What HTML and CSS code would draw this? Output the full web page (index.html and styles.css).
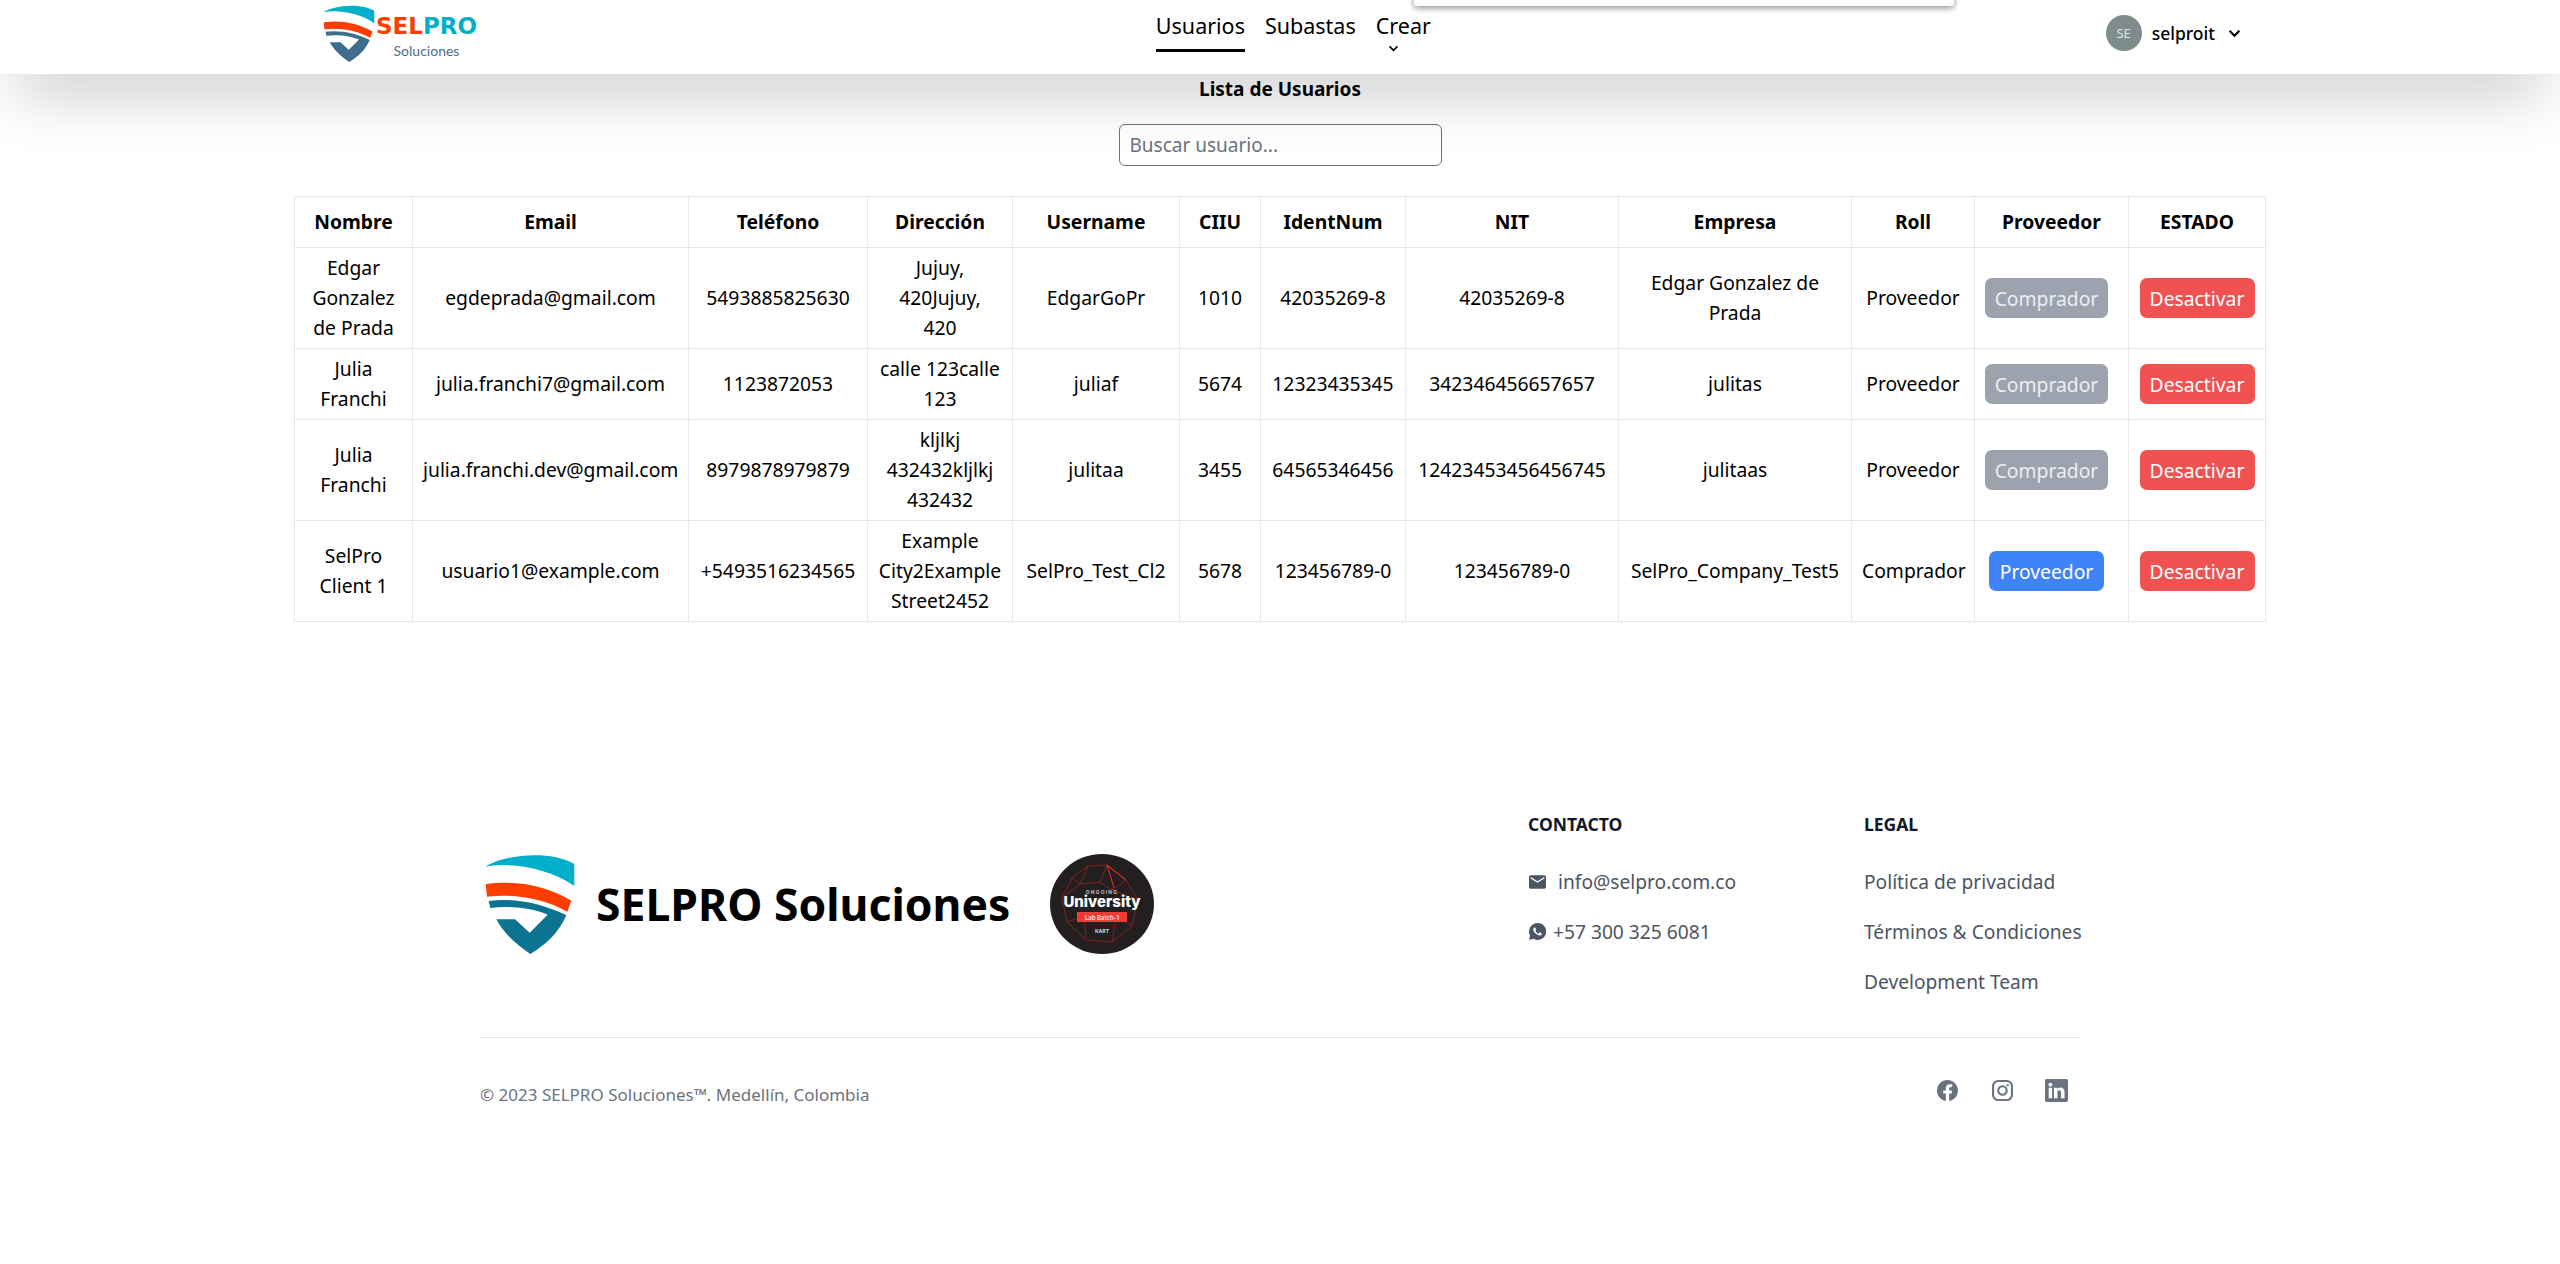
FILE: index.html
```html
<!DOCTYPE html>
<html lang="es">
<head>
    <meta charset="UTF-8">
    <meta name="viewport" content="width=device-width, initial-scale=1.0">
    <title>SELPRO Soluciones - Usuarios</title>
    <link rel="stylesheet" href="styles.css">
</head>
<body>
    <svg class="sprite" aria-hidden="true">
        <symbol id="shield" viewBox="45 42 268 300">
            <path class="shield-top" d="M45 80C85 50 230 25 312 72L312 138C240 85 120 65 45 80Z"/>
            <path class="shield-mid" d="M46 133C130 120 225 135 303 182L291 215C220 175 130 160 50 170Z"/>
            <path class="shield-low" d="M55 183C130 172 215 190 288 226C265 280 225 315 180 342C135 310 100 280 78 238L134 238L178 278L232 224C180 203 120 197 60 204Z"/>
        </symbol>
    </svg>

    <header class="topbar">
        <div class="popup"></div>
        <a class="brand" href="#">
            <svg class="brand-shield"><use href="#shield"/></svg>
            <span class="brand-text">
                <span class="brand-name"><span class="sel">SEL</span><span class="pro">PRO</span></span>
                <span class="brand-sub">Soluciones</span>
            </span>
        </a>
        <nav class="nav">
            <a class="nav-link active" href="#">Usuarios</a>
            <a class="nav-link" href="#">Subastas</a>
            <a class="nav-link nav-drop" href="#">Crear
                <svg class="chevron" viewBox="0 0 12 8"><path d="M1.5 1.5L6 6l4.500-4.500"/></svg>
            </a>
        </nav>
        <div class="user">
            <span class="avatar">SE</span>
            <span class="user-name">selproit</span>
            <svg class="chevron" viewBox="0 0 12 8"><path d="M1.500 1.500L6 6l4.500-4.500"/></svg>
        </div>
    </header>

    <main class="content">
        <h1 class="title">Lista de Usuarios</h1>
        <input class="search" type="text" placeholder="Buscar usuario...">
        <table class="users">
            <colgroup>
                <col class="c-nombre"><col class="c-email"><col class="c-tel"><col class="c-dir">
                <col class="c-user"><col class="c-ciiu"><col class="c-ident"><col class="c-nit">
                <col class="c-empresa"><col class="c-roll"><col class="c-prov"><col class="c-estado">
            </colgroup>
            <thead>
                <tr>
                    <th>Nombre</th><th>Email</th><th>Teléfono</th><th>Dirección</th>
                    <th>Username</th><th>CIIU</th><th>IdentNum</th><th>NIT</th>
                    <th>Empresa</th><th>Roll</th><th>Proveedor</th><th>ESTADO</th>
                </tr>
            </thead>
            <tbody>
                <tr>
                    <td>Edgar Gonzalez de Prada</td>
                    <td>egdeprada@gmail.com</td>
                    <td>5493885825630</td>
                    <td>Jujuy,<br>420Jujuy,<br>420</td>
                    <td>EdgarGoPr</td>
                    <td>1010</td>
                    <td>42035269-8</td>
                    <td>42035269-8</td>
                    <td>Edgar Gonzalez de Prada</td>
                    <td>Proveedor</td>
                    <td><button class="btn btn-gray">Comprador</button></td>
                    <td><button class="btn btn-red">Desactivar</button></td>
                </tr>
                <tr>
                    <td>Julia Franchi</td>
                    <td>julia.franchi7@gmail.com</td>
                    <td>1123872053</td>
                    <td>calle 123calle<br>123</td>
                    <td>juliaf</td>
                    <td>5674</td>
                    <td>12323435345</td>
                    <td>342346456657657</td>
                    <td>julitas</td>
                    <td>Proveedor</td>
                    <td><button class="btn btn-gray">Comprador</button></td>
                    <td><button class="btn btn-red">Desactivar</button></td>
                </tr>
                <tr>
                    <td>Julia Franchi</td>
                    <td>julia.franchi.dev@gmail.com</td>
                    <td>8979878979879</td>
                    <td>kljlkj<br>432432kljlkj<br>432432</td>
                    <td>julitaa</td>
                    <td>3455</td>
                    <td>64565346456</td>
                    <td>12423453456456745</td>
                    <td>julitaas</td>
                    <td>Proveedor</td>
                    <td><button class="btn btn-gray">Comprador</button></td>
                    <td><button class="btn btn-red">Desactivar</button></td>
                </tr>
                <tr>
                    <td>SelPro Client 1</td>
                    <td>usuario1@example.com</td>
                    <td>+5493516234565</td>
                    <td>Example<br>City2Example<br>Street2452</td>
                    <td>SelPro_Test_Cl2</td>
                    <td>5678</td>
                    <td>123456789-0</td>
                    <td>123456789-0</td>
                    <td>SelPro_Company_Test5</td>
                    <td>Comprador</td>
                    <td><button class="btn btn-blue">Proveedor</button></td>
                    <td><button class="btn btn-red">Desactivar</button></td>
                </tr>
            </tbody>
        </table>
    </main>

    <footer class="footer">
        <div class="footer-top">
            <div class="footer-brand">
                <svg class="footer-shield"><use href="#shield"/></svg>
                <span class="footer-name">SELPRO Soluciones</span>
                <svg class="badge" viewBox="0 0 104 100">
                    <ellipse cx="52" cy="50" rx="52" ry="50" fill="#231f20"/>
                    <g class="badge-net">
                        <path d="M38 12L57 11L76 26L88 46L82 72L62 88L36 86L17 68L12 44L22 24Z"/>
                        <path d="M38 12L30 30L12 44M57 11L50 28L30 30L22 24M57 11L76 26L62 36L50 28M88 46L62 36M17 68L34 62L36 86M82 72L66 62L62 88M34 62L66 62"/>
                    </g>
                    <path class="badge-hot" d="M57 11L64 34M57 11L76 26"/>
                    <text class="badge-small" x="52" y="40">ONGOING</text>
                    <text class="badge-title" x="52" y="53">University</text>
                    <rect x="27" y="58" width="50" height="10" fill="#ef3b36"/>
                    <text class="badge-lab" x="52" y="65.500">Lab Batch-1</text>
                    <text class="badge-small badge-foot" x="52" y="79">KART</text>
                </svg>
            </div>
            <div class="footer-col">
                <h2 class="footer-head">CONTACTO</h2>
                <a class="footer-link contact-mail" href="#">
                    <svg class="ico-mail" viewBox="2 4 20 16"><path d="M20 4H4c-1.100 0-2 .9-2 2v12c0 1.100.9 2 2 2h16c1.100 0 2-.9 2-2V6c0-1.100-.9-2-2-2zm0 4l-8 5-8-5V6l8 5 8-5v2z"/></svg>
                    info@selpro.com.co
                </a>
                <a class="footer-link contact-phone" href="#">
                    <svg class="ico-wa" viewBox="0 0 16 16">
                        <path d="M8 0a8 8 0 0 0-6.900 12L0 16l4.200-1.100A8 8 0 1 0 8 0z"/>
                        <path class="ico-wa-phone" d="M11.615 9.550c-.2-.1-1.170-.578-1.353-.646-.182-.065-.315-.1-.445.099-.133.197-.513.646-.627.775-.114.133-.232.148-.43.05-.197-.1-.836-.308-1.592-.985-.59-.525-.985-1.175-1.103-1.372-.114-.198-.011-.304.088-.403.087-.088.197-.232.296-.346.1-.114.133-.198.198-.33.065-.134.034-.248-.015-.347-.05-.099-.445-1.076-.612-1.470-.16-.389-.323-.335-.445-.34-.114-.007-.247-.007-.38-.007a.729.729 0 0 0-.529.247c-.182.198-.691.677-.691 1.654 0 .977.71 1.916.81 2.049.098.133 1.394 2.132 3.383 2.992.47.205.84.326 1.129.418.475.152.904.129 1.246.08.38-.058 1.171-.48 1.338-.943.164-.464.164-.86.114-.943-.049-.084-.182-.133-.38-.232z"/>
                    </svg>
                    +57 300 325 6081
                </a>
            </div>
            <div class="footer-col">
                <h2 class="footer-head">LEGAL</h2>
                <a class="footer-link" href="#">Política de privacidad</a>
                <a class="footer-link" href="#">Términos &amp; Condiciones</a>
                <a class="footer-link" href="#">Development Team</a>
            </div>
        </div>
        <div class="footer-bottom">
            <span class="copy">© 2023 SELPRO Soluciones™. Medellín, Colombia</span>
            <div class="social">
                <svg class="ico-social" viewBox="0 0 16 16"><path d="M16 8.049c0-4.446-3.582-8.050-8-8.050C3.580 0-.002 3.603-.002 8.050c0 4.017 2.926 7.347 6.750 7.951v-5.625h-2.030V8.050H6.750V6.275c0-2.017 1.195-3.131 3.022-3.131.876 0 1.791.157 1.791.157v1.980h-1.009c-.993 0-1.303.621-1.303 1.258v1.510h2.218l-.354 2.326H9.250V16c3.824-.604 6.750-3.934 6.750-7.951z"/></svg>
                <svg class="ico-social ico-ig" viewBox="0 0 20 20">
                    <rect x="1" y="1" width="18" height="18" rx="5"/>
                    <circle cx="10" cy="10" r="4"/>
                    <circle class="ico-ig-dot" cx="15" cy="5" r="1.100"/>
                </svg>
                <svg class="ico-social ico-in" viewBox="0 0 16 16"><path fill-rule="evenodd" d="M0 1.146C0 .513.526 0 1.175 0h13.650C15.474 0 16 .513 16 1.146v13.708c0 .633-.526 1.146-1.175 1.146H1.175C.526 16 0 15.487 0 14.854V1.146zm4.943 12.248V6.169H2.542v7.225h2.401zm-1.200-8.212c.837 0 1.358-.554 1.358-1.248-.015-.709-.52-1.248-1.342-1.248-.822 0-1.359.54-1.359 1.248 0 .694.521 1.248 1.327 1.248h.016zm4.908 8.212V9.359c0-.216.016-.432.08-.586.173-.431.568-.878 1.232-.878.869 0 1.216.662 1.216 1.634v3.865h2.401V9.250c0-2.220-1.184-3.252-2.764-3.252-1.274 0-1.845.7-2.165 1.193v.025h-.016a5.540 5.540 0 0 1 .016-.025V6.169h-2.400c.03.678 0 7.225 0 7.225h2.400z"/></svg>
            </div>
        </div>
    </footer>
</body>
</html>
```

FILE: styles.css
```css
* {
    box-sizing: border-box;
}
body {
    margin: 0;
    background-color: #fff;
    color: #000;
    font-family: "Noto Sans", "Open Sans", sans-serif;
    font-size: 19.3px;
    line-height: 30px;
}
a {
    color: inherit;
    text-decoration: none;
}
.sprite {
    display: none;
}
.shield-top {
    fill: #00afc9;
}
.shield-mid {
    fill: #ff3d00;
}
.shield-low {
    fill: var(--shield-low, #0c7390);
}

/* top bar */
.topbar {
    position: relative;
    z-index: 2;
    display: flex;
    justify-content: space-between;
    align-items: flex-start;
    height: 74px;
    padding: 0 319px 0 323px;
    background-color: #fff;
    box-shadow: 0 31px 62px -15px rgba(0, 0, 0, 0.25);
}
.popup {
    position: absolute;
    top: -10px;
    left: 1414px;
    width: 540px;
    height: 16px;
    background-color: #fff;
    border-radius: 3px;
    box-shadow: 0 2px 6px rgba(0, 0, 0, 0.45);
}
.brand {
    display: flex;
    padding-top: 5px;
    --shield-low: #3e6d8e;
}
.brand-shield {
    width: 52px;
    height: 57px;
}
.brand-text {
    display: flex;
    flex-direction: column;
    align-items: center;
    width: 103px;
}
.brand-name {
    font-family: "DejaVu Sans", sans-serif;
    font-size: 23px;
    font-weight: 700;
    line-height: 24px;
    margin-top: 9px;
}
.sel {
    color: #ff3d00;
}
.pro {
    color: #00afc9;
}
.brand-sub {
    font-family: "Lato", sans-serif;
    font-size: 14px;
    line-height: 14px;
    margin-top: 6px;
    color: #4a6f88;
}
.nav {
    display: flex;
    gap: 20px;
    margin-left: 3px;
}
.nav-link {
    display: block;
    padding-top: 11px;
    height: 52px;
    font-size: 21.5px;
}
.nav-link.active {
    border-bottom: 3px solid #000;
}
.nav-drop {
    display: flex;
    flex-direction: column;
    align-items: center;
}
.chevron {
    display: block;
    width: 13px;
    height: 9px;
    fill: none;
    stroke: #000;
    stroke-width: 2;
}
.nav-drop .chevron {
    margin: 4px 20px 0 0;
}
.user {
    display: flex;
    align-items: center;
    height: 66px;
    font-size: 17.5px;
    font-weight: 500;
}
.avatar {
    display: flex;
    justify-content: center;
    align-items: center;
    width: 36px;
    height: 36px;
    margin-right: 10px;
    border-radius: 50%;
    background-color: #7f8c8c;
    color: #dfe4e4;
    font-size: 13px;
    font-weight: 400;
}
.user-name {
    margin-right: 13px;
}

/* users table */
.content {
    display: flex;
    flex-direction: column;
    align-items: center;
}
.title {
    margin: 0;
    font-size: 19px;
    font-weight: 700;
    line-height: 30px;
}
.search {
    width: 323px;
    height: 42px;
    margin-top: 20px;
    padding: 0 10px;
    border: 1px solid #6b7280;
    border-radius: 6px;
    background-color: #fff;
    font-family: inherit;
    font-size: 19px;
}
.search::placeholder {
    color: #6b7280;
}
.users {
    width: 1971px;
    margin-top: 30px;
    border-collapse: collapse;
    table-layout: fixed;
}
.users th,
.users td {
    border: 1px solid #e5e7eb;
    text-align: center;
    vertical-align: middle;
}
.users th {
    padding: 10px;
    font-size: 19.3px;
    font-weight: 700;
}
.users td {
    padding: 5px 10px;
}
.c-nombre { width: 118px; }
.c-email { width: 276px; }
.c-tel { width: 179px; }
.c-dir { width: 145px; }
.c-user { width: 167px; }
.c-ciiu { width: 81px; }
.c-ident { width: 145px; }
.c-nit { width: 213px; }
.c-empresa { width: 233px; }
.c-roll { width: 123px; }
.c-prov { width: 154px; }
.c-estado { width: 137px; }
.btn {
    height: 40px;
    padding: 0 8px;
    border: none;
    border-radius: 7px;
    color: #fff;
    font-family: inherit;
    font-size: 19.3px;
    white-space: nowrap;
}
.btn-gray {
    width: 123px;
    margin-right: 10px;
    background-color: #9ca3af;
    color: #eceef1;
}
.btn-red {
    width: 115px;
    background-color: #f05252;
}
.btn-blue {
    width: 115px;
    margin-right: 10px;
    background-color: #3f83f8;
}

/* footer */
.footer {
    width: 1600px;
    margin: 190px auto 0;
    padding-bottom: 146px;
}
.footer-top {
    display: grid;
    grid-template-columns: 1fr 336px 216px;
    padding-bottom: 43px;
    border-bottom: 1px solid #e5e7eb;
}
.footer-brand {
    display: flex;
    align-items: center;
    align-self: start;
    margin-top: 42px;
    padding-left: 4px;
}
.footer-shield {
    width: 92px;
    height: 100px;
}
.footer-name {
    margin-left: 20px;
    font-size: 44.5px;
    font-weight: 700;
    line-height: 50px;
}
.badge {
    width: 104px;
    height: 100px;
    margin-left: 40px;
}
.badge-net {
    fill: none;
    stroke: #b3261e;
    stroke-width: 0.6;
}
.badge-hot {
    fill: none;
    stroke: #ff2a20;
    stroke-width: 1;
}
.badge-small {
    fill: #bbb;
    font-family: "Inter", sans-serif;
    font-size: 5px;
    font-weight: 700;
    letter-spacing: 1.2px;
    text-anchor: middle;
}
.badge-foot {
    fill: #ddd;
    letter-spacing: 0;
}
.badge-title {
    fill: #fff;
    font-family: "Inter", sans-serif;
    font-size: 15px;
    font-weight: 800;
    text-anchor: middle;
}
.badge-lab {
    fill: #ffe3e0;
    font-family: "Inter", sans-serif;
    font-size: 6px;
    font-weight: 600;
    text-anchor: middle;
}
.footer-col {
    display: flex;
    flex-direction: column;
    align-items: flex-start;
}
.footer-head {
    margin: 0 0 33.5px;
    color: #111827;
    font-size: 17.5px;
    font-weight: 700;
    line-height: 24px;
}
.footer-link {
    display: flex;
    align-items: center;
    height: 24px;
    margin-bottom: 26px;
    color: #4b5563;
    font-size: 19.2px;
    line-height: 24px;
    white-space: nowrap;
}
.footer-col .footer-link:last-child {
    margin-bottom: 0;
}
.ico-mail {
    width: 17px;
    height: 14px;
    margin: 0 12px 0 1px;
    fill: #4b5563;
}
.ico-wa {
    width: 17px;
    height: 17px;
    margin: 0 7px 0 1px;
    fill: #4b5563;
}
.ico-wa-phone {
    fill: #fff;
}
.footer-bottom {
    display: flex;
    justify-content: space-between;
    align-items: flex-start;
    padding-top: 41px;
}
.copy {
    margin-top: 4px;
    color: #6b7280;
    font-size: 17px;
    line-height: 24px;
}
.social {
    display: flex;
    align-items: center;
    gap: 34px;
    margin-right: 12px;
}
.ico-social {
    width: 21px;
    height: 21px;
    fill: #6b7280;
}
.ico-ig {
    fill: none;
    stroke: #6b7280;
    stroke-width: 2;
}
.ico-ig-dot {
    fill: #6b7280;
    stroke: none;
}
.ico-in {
    width: 23px;
    height: 23px;
    margin-left: -2px;
}
```
